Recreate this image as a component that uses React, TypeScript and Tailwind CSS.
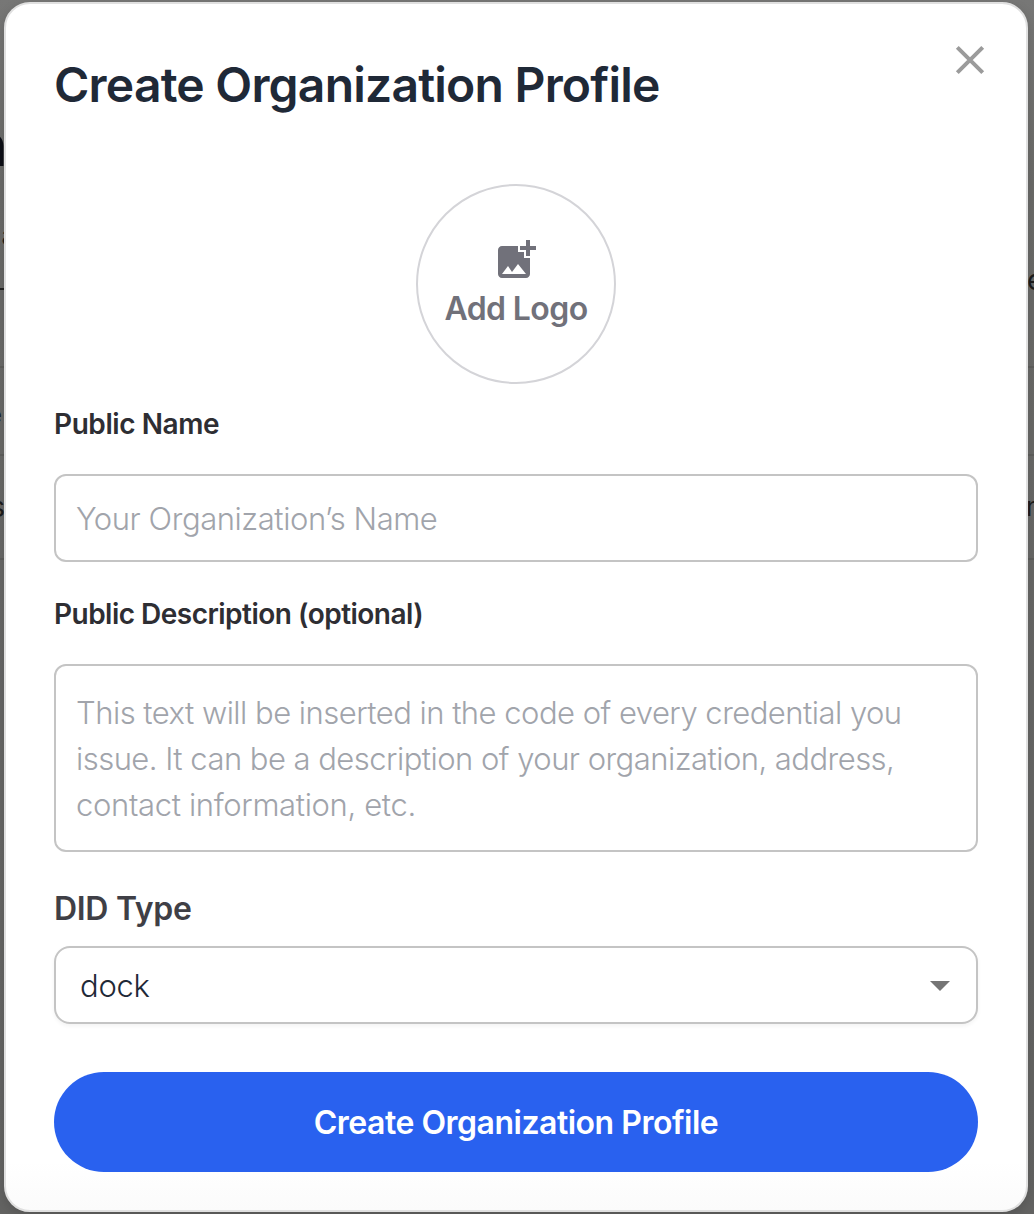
import type { ReactNode } from "react";
import { MdAddPhotoAlternate } from "react-icons/md";

function Label({ className, children }: { className: string; children: ReactNode }) {
  return <div className={`whitespace-nowrap font-semibold ${className}`}>{children}</div>;
}

/* The dimmed page that shows at both sides of the dialog. */
function Backdrop() {
  return (
    <div
      aria-hidden="true"
      className="absolute inset-0 flex justify-between bg-linear-to-b from-[#777776] via-[#6b6b69] via-15% to-[#636362] text-[28px] leading-8 text-[#1c1c1c]"
    >
      <div className="flex w-1 flex-col overflow-hidden">
        <div className="flex h-[166px] items-end justify-end">
          <span className="-mr-[3px] -mb-2 text-[58px] leading-[58px] font-bold text-[#0c0e16]">n</span>
        </div>
        <div className="flex h-[124px] items-end justify-end border-b-2 border-[#242424] pb-9">
          <span className="-mr-3 text-[26px]">a</span>
        </div>
        <div className="h-[78px] border-b-2 border-[#5e5e5c]" />
        <div className="flex h-[88px] items-center justify-end border-b-2 border-[#5e5e5c] pt-2">
          <span className="mr-[2px] text-[24px]">e</span>
        </div>
        <div className="flex h-[104px] items-center justify-end border-b-2 border-[#5e5e5c]">
          <span className="-mr-px">s</span>
        </div>
      </div>
      <div className="flex w-1.5 flex-col overflow-hidden">
        <div className="flex h-[368px] items-end border-b-2 border-[#5e5e5c] pb-[70px]">
          <span className="-ml-px">e</span>
        </div>
        <div className="h-[88px] border-b-2 border-[#5e5e5c]" />
        <div className="flex h-[104px] items-center border-b-2 border-[#5e5e5c]">
          <span className="-ml-[2px] text-[26px]">n</span>
        </div>
      </div>
    </div>
  );
}

export default function App() {
  return (
    <div className="relative h-[1214px] w-[1034px] overflow-hidden pt-[2px] pl-1 font-['Inter',sans-serif]">
      <Backdrop />
      <div
        role="dialog"
        className="relative flex h-[1210px] w-[1024px] flex-col rounded-[26px] border-2 border-[#e0e0e0] bg-linear-to-b from-white from-96% to-[#fbfbfb] px-12 pt-[50px] shadow-[0_4px_12px_rgba(0,0,0,0.15)]"
      >
        <button aria-label="Close" className="absolute top-10 right-10">
          <svg width="32" height="32" viewBox="0 0 32 32" stroke="#9b9b9b" strokeWidth="4">
            <path d="M3.3 3.3 L28.7 28.7 M28.7 3.3 L3.3 28.7" />
          </svg>
        </button>

        <h1 className="text-[48px] leading-[61px] font-semibold tracking-[-0.78px] whitespace-nowrap text-[#1f2937]">
          Create Organization Profile
        </h1>

        <button className="mt-[69px] flex size-[200px] flex-col items-center justify-center self-center rounded-full border-2 border-[#d4d4d8] text-[#71717a]">
          <MdAddPhotoAlternate className="size-12" />
          <span className="pt-0.5 text-[32px] leading-[46px] font-semibold tracking-[-0.6px] whitespace-nowrap">Add Logo</span>
        </button>

        <div className="flex flex-col gap-[29px] pt-[19px]">
          <Label className="text-[28px] leading-[42px] tracking-[-0.42px] text-[#2e2e33]">Public Name</Label>
          <div className="flex h-[88px] items-center rounded-xl border-2 border-[#c4c4c4] px-5 pt-0.5 text-[31px] font-light tracking-[-0.43px] text-[#a1a4ab]">
            Your Organization’s Name
          </div>
        </div>

        <div className="flex flex-col gap-[29px] pt-[31px]">
          <Label className="text-[28px] leading-[42px] tracking-[-0.52px] text-[#2e2e33]">
            Public Description (optional)
          </Label>
          <div className="h-[188px] rounded-xl border-2 border-[#c4c4c4] px-5 pt-6 text-[31px] leading-[46px] font-light whitespace-nowrap text-[#a1a4ab]">
            <p className="tracking-[-0.52px]">This text will be inserted in the code of every credential you</p>
            <p className="tracking-[-0.53px]">issue. It can be a description of your organization, address,</p>
            <p className="tracking-[-0.35px]">contact information, etc.</p>
          </div>
        </div>

        <div className="flex flex-col gap-[13px] pt-[33px]">
          <Label className="text-[32px] leading-[48px] tracking-[-0.3px] text-[#3f3f46]">DID Type</Label>
          <div className="flex h-[78px] items-center justify-between rounded-2xl border-2 border-[#c4c4c4] pt-0.5 pr-[26px] pl-6 shadow-[0_2px_4px_rgba(0,0,0,0.05)]">
            <span className="text-[31px] font-light tracking-[-0.27px] text-[#1f2937]">dock</span>
            <svg width="20" height="10" viewBox="0 0 20 10" fill="#757575">
              <path d="M0 0h20L10 10z" />
            </svg>
          </div>
        </div>

        <button className="mt-12 h-[100px] shrink-0 rounded-full bg-[#2961ef] pt-0.5 text-[32px] font-semibold tracking-[-0.495px] text-white">
          Create Organization Profile
        </button>
      </div>
    </div>
  );
}
